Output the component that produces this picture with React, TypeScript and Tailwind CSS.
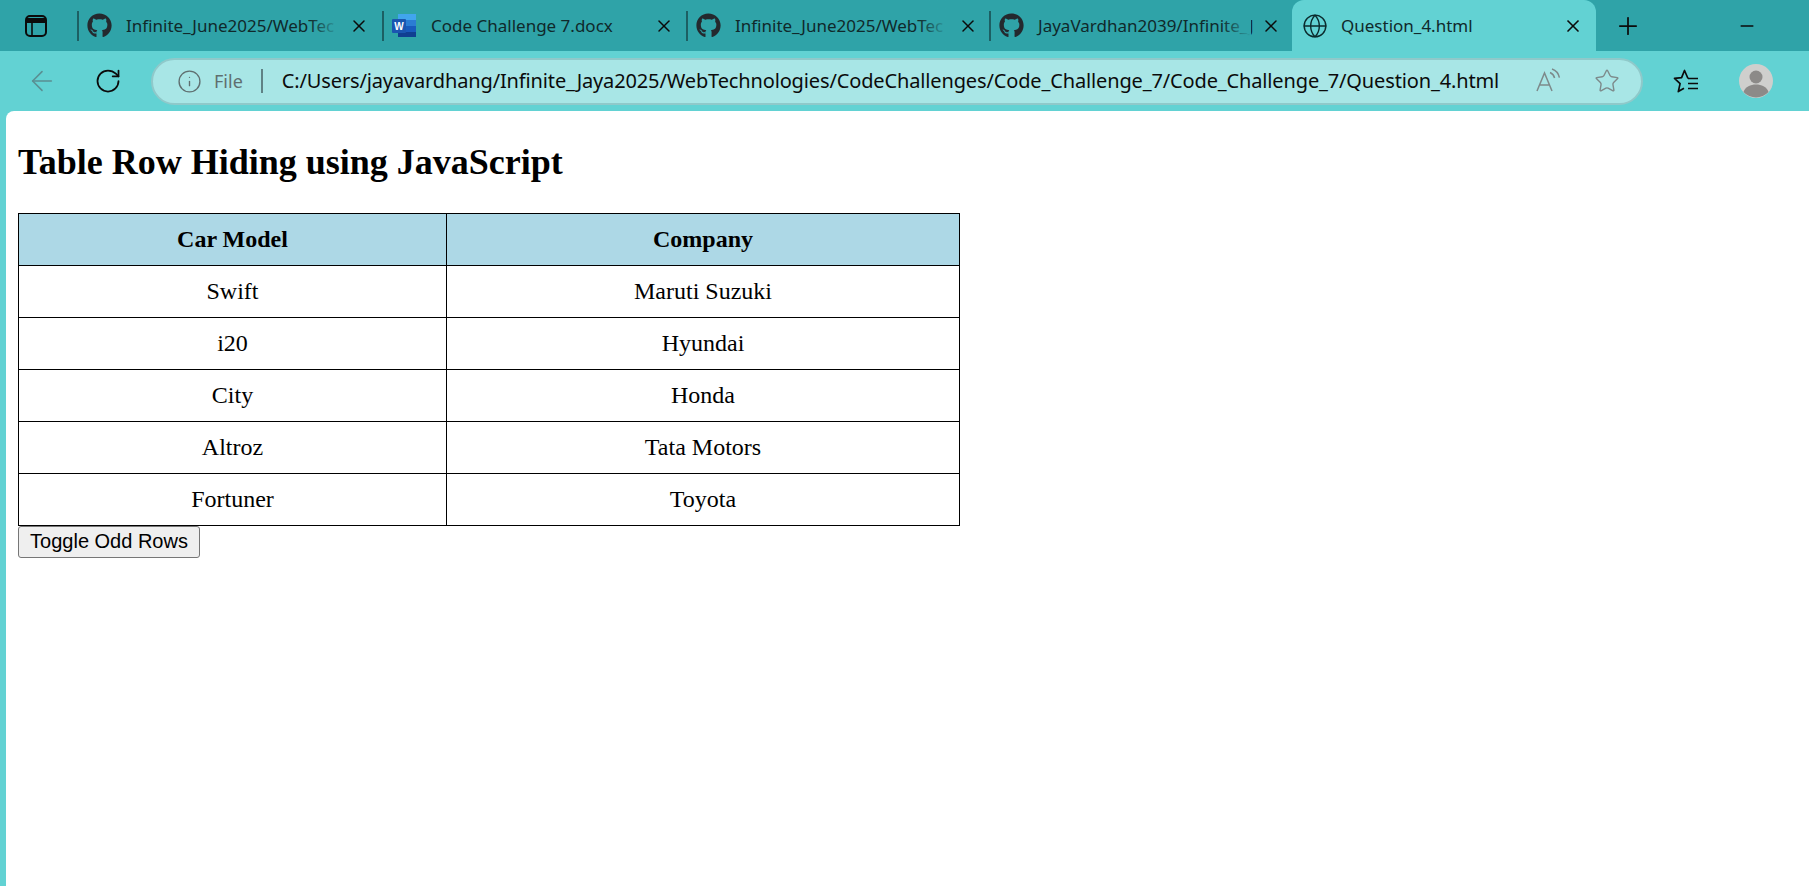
import React from 'react';
import { FaGithub } from 'react-icons/fa';
import { ArrowLeft, Globe, Info, Minus, Plus, RotateCw, Star, X } from 'lucide-react';

const uiFont = { fontFamily: '"Noto Sans", "Open Sans", sans-serif' };

const rows = [
  ['Swift', 'Maruti Suzuki'],
  ['i20', 'Hyundai'],
  ['City', 'Honda'],
  ['Altroz', 'Tata Motors'],
  ['Fortuner', 'Toyota'],
];

const WordIcon = () => (
  <svg width="25" height="25" viewBox="0 0 25 25">
    <rect x="6" y="1" width="18" height="6" fill="#41a5ee" />
    <rect x="6" y="7" width="18" height="6" fill="#2b7cd3" />
    <rect x="6" y="13" width="18" height="6" fill="#185abd" />
    <rect x="6" y="19" width="18" height="5" fill="#103f91" />
    <rect x="0" y="6" width="14" height="14" rx="1" fill="#1a56b0" />
    <text x="7" y="17" textAnchor="middle" fill="#fff" fontSize="10" fontWeight="700" fontFamily="Liberation Sans, sans-serif">W</text>
  </svg>
);

const PanelIcon = () => (
  <svg width="24" height="24" viewBox="0 0 24 24" fill="none" stroke="#0b0b0b" strokeWidth="2">
    <rect x="2" y="2" width="20" height="20" rx="4" />
    <path d="M2.5 6.5h19" strokeWidth="5" />
    <path d="M8 8v14" strokeWidth="1.6" />
  </svg>
);

const ReadAloudIcon = () => (
  <svg width="26" height="26" viewBox="0 0 26 26" fill="none" stroke="#7d8a8b" strokeWidth="1.5">
    <path d="M2 23 9.5 5 17 23M4.8 17h9.6" />
    <path d="M15 4.5c2.5 1 4 3 4.6 5.5M17 1c4 1.4 6.6 4.6 7.4 8.6" />
  </svg>
);

const FavoritesIcon = () => (
  <svg width="26" height="26" viewBox="0 0 26 26" fill="none" stroke="#0b0b0b" strokeWidth="1.7" strokeLinejoin="round">
    <path d="M15 10.5 11.5 2.5 8.6 9.6 1.5 10.4l5.6 5.2-1.8 8 5.7-3.4" />
    <path d="M15 10.5h10M15 15.5h10M15 20.5h10" />
  </svg>
);

const Avatar = () => (
  <svg width="34" height="34" viewBox="0 0 34 34">
    <circle cx="17" cy="17" r="17" fill="#cfcfcd" />
    <circle cx="17" cy="13" r="6.5" fill="#8c8a88" />
    <path d="M4.5 28c2-5.5 7-7.5 12.5-7.5S27.5 22.5 29.5 28a17 17 0 0 1-25 0Z" fill="#8c8a88" />
  </svg>
);

const Tab = ({ icon, title, width, fade = true }: { icon: React.ReactNode; title: string; width: string; fade?: boolean }) => (
  <div className={`relative flex h-full shrink-0 items-center ${width}`}>
    <div className="h-[30px] w-[2px] shrink-0 bg-[#1c5f63]" />
    <div className="ml-[8px] flex w-[25px] shrink-0 items-center justify-center">{icon}</div>
    <div className="ml-[14px] w-[212px] whitespace-nowrap text-[17px] text-[#10292b]">{title}</div>
    {fade && <div className="absolute left-[232px] top-0 h-full w-[30px] bg-gradient-to-r from-transparent to-[#2fa3a8]" />}
    <X size={20} strokeWidth={1.8} className="absolute left-[272px] text-[#0b0b0b]" />
  </div>
);

export default function App() {
  return (
    <div className="flex h-[886px] w-[1809px] flex-col overflow-hidden bg-[#62d2d3]">
      <div className="flex h-[51px] shrink-0 items-center bg-[#2fa3a8]" style={uiFont}>
        <div className="flex w-[77px] shrink-0 justify-center pr-[5px]">
          <PanelIcon />
        </div>
        <Tab width="w-[305px]" icon={<FaGithub size={25} color="#24292e" />} title="Infinite_June2025/WebTec" />
        <Tab width="w-[304px]" icon={<WordIcon />} title="Code Challenge 7.docx" fade={false} />
        <Tab width="w-[303px]" icon={<FaGithub size={25} color="#24292e" />} title="Infinite_June2025/WebTec" />
        <Tab width="w-[303px]" icon={<FaGithub size={25} color="#24292e" />} title="JayaVardhan2039/Infinite_J" />
        <div className="relative flex h-full w-[304px] shrink-0 items-center rounded-t-xl bg-[#62d2d3] pl-[10px]">
          <Globe size={26} strokeWidth={1.3} className="text-[#0b2b2d]" />
          <span className="ml-[13px] text-[17px] text-[#10292b]">Question_4.html</span>
          <X size={20} strokeWidth={2} className="absolute left-[271px] text-[#0b0b0b]" />
        </div>
        <Plus size={28} strokeWidth={1.5} className="ml-[18px] text-[#0b0b0b]" />
        <Minus size={20} strokeWidth={1.8} className="ml-[95px] text-[#0b0b0b]" />
      </div>

      <div className="flex h-[60px] shrink-0 items-center" style={uiFont}>
        <ArrowLeft size={32} strokeWidth={1.2} className="ml-[26px] text-[#5a8f92]" />
        <RotateCw size={28} strokeWidth={1.5} className="ml-[36px] text-[#0b0b0b]" />
        <div className="ml-[29px] flex h-[47px] w-[1492px] shrink-0 items-center rounded-full border-2 border-[#8fc9ca] bg-[#a8e6e6]">
          <Info size={25} strokeWidth={1.3} className="ml-[24px] text-[#5f6f70]" />
          <span className="ml-[12px] text-[18px] text-[#5f6f70]">File</span>
          <div className="ml-[18px] h-[24px] w-[2px] bg-[#5f8285]" />
          <span className="ml-[19px] w-[1220px] whitespace-nowrap text-[20px] tracking-[-0.14px] text-[#0b0b0b]">
            C:/Users/jayavardhang/Infinite_Jaya2025/WebTechnologies/CodeChallenges/Code_Challenge_7/Code_Challenge_7/Question_4.html
          </span>
          <div className="ml-[33px]"><ReadAloudIcon /></div>
          <Star size={26} strokeWidth={1.3} className="ml-[33px] text-[#7d8a8b]" />
        </div>
        <div className="ml-[30px]"><FavoritesIcon /></div>
        <div className="ml-[40px]"><Avatar /></div>
      </div>

      <div
        className="ml-[6px] flex-1 rounded-tl-lg bg-white pl-[12px] text-black"
        style={{ fontFamily: '"Liberation Serif", serif' }}
      >
        <h2 className="mt-[31px] text-[36px] font-bold leading-[41px]">Table Row Hiding using JavaScript</h2>
        <table className="mt-[30px] w-[942px] table-fixed border-collapse text-center text-[24px]">
          <colgroup>
            <col className="w-[428px]" />
            <col />
          </colgroup>
          <thead>
            <tr className="h-[52px] bg-[#add8e6]">
              <th className="border border-black pb-[2px] font-bold">Car Model</th>
              <th className="border border-black pb-[2px] font-bold">Company</th>
            </tr>
          </thead>
          <tbody>
            {rows.map(([model, company]) => (
              <tr key={model} className="h-[52px]">
                <td className="border border-black pb-[2px]">{model}</td>
                <td className="border border-black pb-[2px]">{company}</td>
              </tr>
            ))}
          </tbody>
        </table>
        <button
          className="block h-[32px] w-[182px] rounded-[3px] border border-[#767676] bg-[#efefef] pb-[2px] text-[20px] leading-none text-black"
          style={{ fontFamily: '"Liberation Sans", sans-serif' }}
        >
          Toggle Odd Rows
        </button>
      </div>
    </div>
  );
}
